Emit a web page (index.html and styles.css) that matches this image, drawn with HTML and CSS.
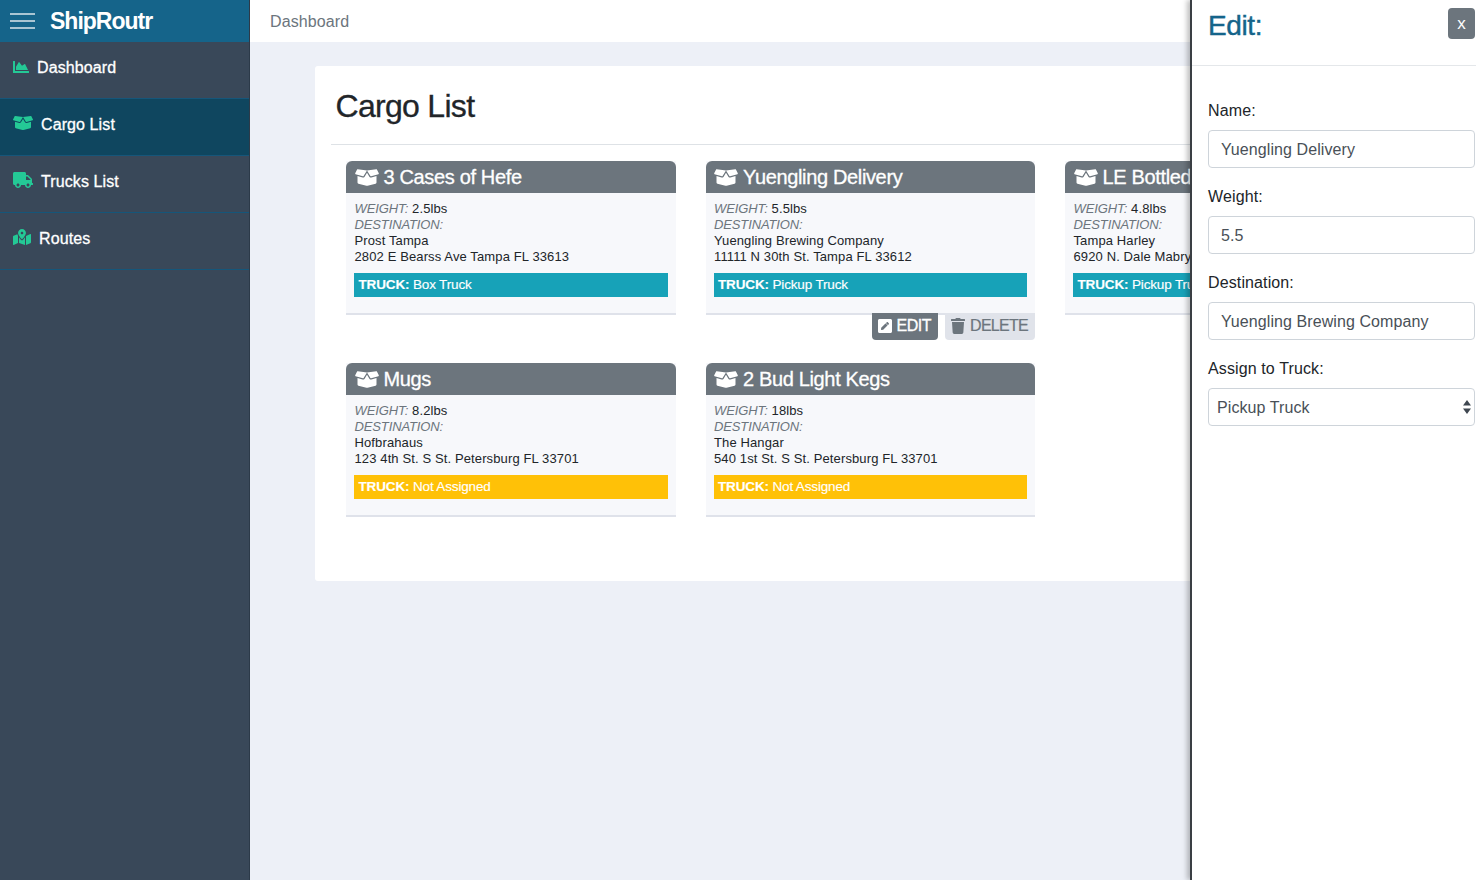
FILE: index.html
```html
<!DOCTYPE html>
<html lang="en">
<head>
<meta charset="utf-8">
<title>ShipRoutr</title>
<link rel="stylesheet" href="styles.css">
</head>
<body>
<svg class="defs" width="0" height="0">
  <symbol id="i-box" viewBox="0 0 640 512"><path d="M425.7 256c-16.9 0-32.8-9-41.4-23.4L320 126l-64.2 106.6c-8.7 14.5-24.6 23.5-41.5 23.5-4.5 0-9-.6-13.3-1.9L64 215v178c0 14.7 10 27.5 24.2 31l216.2 54.1c10.2 2.5 20.9 2.5 31 0L551.8 424c14.2-3.6 24.2-16.4 24.2-31V215l-137 39.1c-4.3 1.3-8.8 1.9-13.3 1.9zm212.6-112.2L586.8 41c-3.1-6.2-9.8-9.8-16.7-8.9L320 64l91.7 152.1c3.8 6.3 11.4 9.3 18.5 7.3l197.9-56.5c9.9-2.9 14.7-13.9 10.2-23.1zM53.2 41L1.7 143.8c-4.6 9.2.3 20.2 10.1 23l197.9 56.5c7.1 2 14.7-1 18.5-7.3L320 64 69.8 32.1c-6.9-.8-13.5 2.7-16.6 8.9z"/></symbol>
  <symbol id="i-chart" viewBox="0 0 512 512"><path d="M500 384c6.6 0 12 5.4 12 12v40c0 6.6-5.4 12-12 12H12c-6.6 0-12-5.4-12-12V76c0-6.6 5.4-12 12-12h40c6.6 0 12 5.4 12 12v308h436zM372.7 159.5L288 216l-85.3-113.7c-5.1-6.8-15.5-6.3-19.9 1L96 248v104h384l-89.9-187.8c-3.2-6.5-11.4-8.7-17.4-4.7z"/></symbol>
  <symbol id="i-truck" viewBox="0 0 640 512"><path d="M624 352h-16V243.9c0-12.7-5.1-24.9-14.1-33.9L494 110.1c-9-9-21.2-14.1-33.9-14.1H416V48c0-26.5-21.5-48-48-48H48C21.5 0 0 21.5 0 48v320c0 26.5 21.5 48 48 48h16c0 53 43 96 96 96s96-43 96-96h128c0 53 43 96 96 96s96-43 96-96h48c8.8 0 16-7.2 16-16v-32c0-8.8-7.2-16-16-16zM160 464c-26.5 0-48-21.5-48-48s21.5-48 48-48 48 21.5 48 48-21.5 48-48 48zm320 0c-26.5 0-48-21.5-48-48s21.5-48 48-48 48 21.5 48 48-21.5 48-48 48zm80-208H416V144h44.1l99.9 99.9V256z"/></symbol>
  <symbol id="i-map" viewBox="0 0 576 512"><path d="M288 0c-69.59 0-126 56.41-126 126 0 56.26 82.35 158.8 113.9 196.02 6.39 7.54 17.82 7.54 24.2 0C331.65 284.8 414 182.26 414 126 414 56.41 357.59 0 288 0zm0 168c-23.2 0-42-18.8-42-42s18.8-42 42-42 42 18.8 42 42-18.8 42-42 42zM20.12 215.95A32.006 32.006 0 0 0 0 245.66v250.32c0 11.32 11.43 19.06 21.94 14.86L160 448V214.92c-8.84-15.98-16.07-31.54-21.25-46.42L20.12 215.95zM288 359.67c-14.07 0-27.38-6.18-36.51-16.96-19.66-23.2-40.57-49.62-59.49-76.72V448l192 64V265.99c-18.92 27.09-39.82 53.52-59.49 76.72-9.13 10.77-22.44 16.96-36.51 16.96zm266.06-198.51L416 224v288l139.88-55.95A31.996 31.996 0 0 0 576 426.34V176.02c0-11.32-11.43-19.06-21.94-14.86z"/></symbol>
  <symbol id="i-edit" viewBox="0 0 448 512"><path d="M400 480H48c-26.5 0-48-21.5-48-48V80c0-26.5 21.5-48 48-48h352c26.5 0 48 21.5 48 48v352c0 26.5-21.5 48-48 48zM238.1 177.9L102.4 313.6l-6.3 57.1c-.8 7.6 5.6 14.1 13.3 13.3l57.1-6.3L302.2 242c2.3-2.3 2.3-6.1 0-8.5L246.7 178c-2.5-2.4-6.3-2.4-8.6-.1zM345 165.1L314.9 135c-9.4-9.4-24.6-9.4-33.9 0l-23.1 23.1c-2.3 2.3-2.3 6.1 0 8.5l55.5 55.5c2.3 2.3 6.1 2.3 8.5 0L345 199c9.3-9.3 9.3-24.5 0-33.9z"/></symbol>
  <symbol id="i-trash" viewBox="0 0 448 512"><path d="M432 32H312l-9.4-18.7A24 24 0 0 0 281.1 0H166.8a23.72 23.72 0 0 0-21.4 13.3L136 32H16A16 16 0 0 0 0 48v32a16 16 0 0 0 16 16h416a16 16 0 0 0 16-16V48a16 16 0 0 0-16-16zM53.2 467a48 48 0 0 0 47.9 45h245.8a48 48 0 0 0 47.9-45L416 128H32z"/></symbol>
</svg>

<div class="app">
  <aside class="sidebar">
    <div class="brand">
      <span class="burger"><i></i><i></i><i></i></span>
      <span class="brand-name">ShipRoutr</span>
    </div>
    <nav class="nav">
      <a class="nav-item nav-dash"><svg class="nav-icon ic-chart"><use href="#i-chart"/></svg>Dashboard</a>
      <a class="nav-item nav-cargo active"><svg class="nav-icon ic-box"><use href="#i-box"/></svg>Cargo List</a>
      <a class="nav-item nav-trucks"><svg class="nav-icon ic-truck"><use href="#i-truck"/></svg>Trucks List</a>
      <a class="nav-item nav-routes"><svg class="nav-icon ic-map"><use href="#i-map"/></svg>Routes</a>
    </nav>
  </aside>

  <div class="page">
    <header class="topbar">Dashboard</header>
    <main class="main">
      <section class="panel">
        <h1 class="title">Cargo List</h1>
        <div class="grid">
          <article class="card-col">
            <div class="card">
              <h2 class="card-head"><svg class="head-icon"><use href="#i-box"/></svg>3 Cases of Hefe</h2>
              <div class="card-body">
                <p><em>WEIGHT:</em> 2.5lbs</p>
                <p><em>DESTINATION:</em></p>
                <p>Prost Tampa</p>
                <p>2802 E Bearss Ave Tampa FL 33613</p>
                <div class="truck info"><b>TRUCK:</b> Box Truck</div>
              </div>
            </div>
          </article>
          <article class="card-col">
            <div class="card">
              <h2 class="card-head"><svg class="head-icon"><use href="#i-box"/></svg>Yuengling Delivery</h2>
              <div class="card-body">
                <p><em>WEIGHT:</em> 5.5lbs</p>
                <p><em>DESTINATION:</em></p>
                <p>Yuengling Brewing Company</p>
                <p>11111 N 30th St. Tampa FL 33612</p>
                <div class="truck info"><b>TRUCK:</b> Pickup Truck</div>
              </div>
            </div>
            <div class="actions">
              <button class="btn btn-edit"><svg class="btn-icon"><use href="#i-edit"/></svg>EDIT</button>
              <button class="btn btn-delete"><svg class="btn-icon"><use href="#i-trash"/></svg>DELETE</button>
            </div>
          </article>
          <article class="card-col">
            <div class="card">
              <h2 class="card-head"><svg class="head-icon"><use href="#i-box"/></svg>LE Bottled Beer</h2>
              <div class="card-body">
                <p><em>WEIGHT:</em> 4.8lbs</p>
                <p><em>DESTINATION:</em></p>
                <p>Tampa Harley</p>
                <p>6920 N. Dale Mabry Hwy Tampa FL 33614</p>
                <div class="truck info"><b>TRUCK:</b> Pickup Truck</div>
              </div>
            </div>
          </article>
          <article class="card-col">
            <div class="card">
              <h2 class="card-head"><svg class="head-icon"><use href="#i-box"/></svg>Mugs</h2>
              <div class="card-body">
                <p><em>WEIGHT:</em> 8.2lbs</p>
                <p><em>DESTINATION:</em></p>
                <p>Hofbrahaus</p>
                <p>123 4th St. S St. Petersburg FL 33701</p>
                <div class="truck warn"><b>TRUCK:</b> Not Assigned</div>
              </div>
            </div>
          </article>
          <article class="card-col">
            <div class="card">
              <h2 class="card-head"><svg class="head-icon"><use href="#i-box"/></svg>2 Bud Light Kegs</h2>
              <div class="card-body">
                <p><em>WEIGHT:</em> 18lbs</p>
                <p><em>DESTINATION:</em></p>
                <p>The Hangar</p>
                <p>540 1st St. S St. Petersburg FL 33701</p>
                <div class="truck warn"><b>TRUCK:</b> Not Assigned</div>
              </div>
            </div>
          </article>
        </div>
      </section>
    </main>
  </div>

  <aside class="drawer">
    <div class="drawer-head">
      <h2 class="drawer-title">Edit:</h2>
      <button class="close">x</button>
    </div>
    <form class="form">
      <label class="label" for="f-name">Name:</label>
      <input class="field" id="f-name" value="Yuengling Delivery">
      <label class="label" for="f-weight">Weight:</label>
      <input class="field" id="f-weight" value="5.5">
      <label class="label" for="f-dest">Destination:</label>
      <input class="field" id="f-dest" value="Yuengling Brewing Company">
      <label class="label" for="f-truck">Assign to Truck:</label>
      <div class="select-wrap">
        <select class="field select" id="f-truck"><option>Pickup Truck</option><option>Box Truck</option></select>
        <svg class="arrows" viewBox="0 0 8 14"><path d="M4 0l4 5.500H0zM4 14L0 8.500h8z"/></svg>
      </div>
    </form>
  </aside>
</div>
</body>
</html>
```
FILE: styles.css
```css
* { box-sizing: border-box; }
html, body { margin: 0; height: 100%; overflow: hidden; }
body { font-family: "Liberation Sans", Arial, sans-serif; font-size: 16px; color: #212529; }
.defs { position: absolute; }
svg { fill: currentColor; display: block; flex: none; }

.app { position: relative; display: flex; width: 1476px; height: 880px; overflow: hidden; }

.sidebar { width: 250px; flex: none; background: #394859; border-right: 1px solid #2c3a49; color: #fff; }
.brand { height: 42px; background: #15648a; display: flex; align-items: center; padding-left: 10px; }
.burger { width: 25px; display: flex; flex-direction: column; gap: 5px; margin-right: 15px; }
.burger i { display: block; height: 2px; background: #a9c5d3; }
.brand-name { font-size: 23px; font-weight: 700; letter-spacing: -1px; }
.nav-item { height: 57px; display: flex; align-items: flex-start; padding: 16px 0 0 13px; font-size: 16px; line-height: 20px; border-bottom: 1px solid #15567a; -webkit-text-stroke: .3px #fff; letter-spacing: .1px; }
.nav-item.active { background: #0f465f; }
.nav-icon { color: #24c996; }
.ic-chart { width: 16px; height: 16px; margin-right: 8px; margin-top: 1px; }
.ic-box { width: 20px; height: 16px; margin-right: 8px; margin-top: 0; }
.ic-truck { width: 20px; height: 16px; margin-right: 8px; margin-top: 0; }
.ic-map { width: 18px; height: 16px; margin-right: 8px; margin-top: 0; }

.page { flex: 1; min-width: 0; display: flex; flex-direction: column; background: #edf0f7; }
.topbar { height: 42px; flex: none; background: #fff; padding: 12px 0 0 20px; line-height: 20px; color: #6c757d; font-size: 16px; letter-spacing: .1px; }
.main { flex: 1; padding: 24px 0 0 65px; }
.panel { width: 1110px; height: 515px; background: #fff; border-radius: 3px; padding: 0 16px; }
.title { margin: 0; height: 79px; border-bottom: 1px solid #dee2e6; padding: 22px 0 0 4.500px; font-size: 32px; line-height: 36px; font-weight: 500; letter-spacing: -.7px; -webkit-text-stroke: .3px #212529; }
.grid { display: flex; flex-wrap: wrap; width: 1079px; }
.card-col { width: 359.5px; height: 202px; padding: 16px 15px 0; }
.card { border-bottom: 2px solid #dfe2ea; background: #f7f8fb; height: 154px; }
.card-head { margin: 0; height: 32px; background: #6c757d; color: #fff; border-radius: 6px 6px 0 0; display: flex; align-items: center; padding-left: 8.500px; font-size: 20px; line-height: 32px; font-weight: 400; white-space: nowrap; overflow: hidden; letter-spacing: -.35px; -webkit-text-stroke: .3px #fff; }
.head-icon { width: 24px; height: 19px; margin-right: 5px; }
.card-body { padding: 8px 8px 0; font-size: 13px; line-height: 16px; color: #212529; }
.card-body p { margin: 0 0 0 .5px; white-space: nowrap; letter-spacing: .12px; }
.card-body em { color: #6c757d; letter-spacing: -.12px; }
.truck { height: 24px; margin-top: 8px; padding-left: 4.500px; line-height: 23px; color: #fff; font-size: 13.500px; white-space: nowrap; overflow: hidden; letter-spacing: -.15px; -webkit-text-stroke: .15px #fff; }
.info { background: #17a2b8; }
.warn { background: #ffc107; }
.actions { display: flex; justify-content: flex-end; gap: 7px; margin-top: -2px; }
.btn { height: 27px; border: 0; padding: 0 7px 1px 6px; display: flex; align-items: center; font: 16px "Liberation Sans", Arial, sans-serif; border-radius: 0 0 4px 4px; letter-spacing: -.5px; }
.btn-icon { width: 14px; height: 16px; margin-right: 5px; }
.btn-edit { background: #6c757d; color: #fff; -webkit-text-stroke: .3px #fff; }
.btn-delete { background: #e0e3ea; color: #6c757d; letter-spacing: -.72px; -webkit-text-stroke: .2px #6c757d; }

.drawer { position: absolute; top: 0; right: 0; bottom: 0; width: 286px; background: #fff; border-left: 2px solid #3a3f44; box-shadow: -3px 0 5px rgba(0,0,0,.25); }
.drawer-head { height: 66px; border-bottom: 1px solid #e4e7ea; display: flex; justify-content: space-between; padding: 8px 1px 0 16px; }
.drawer-title { margin: 0; font-size: 28px; line-height: 36px; color: #15648a; font-weight: 400; letter-spacing: -.4px; -webkit-text-stroke: .4px #15648a; }
.close { width: 27px; height: 31px; border: 0; border-radius: 4px; background: #6c757d; color: #fff; font: 17px/1 "Liberation Sans", Arial, sans-serif; padding: 0; }
.form { padding: 33px 1px 0 16px; display: flex; flex-direction: column; }
.label { line-height: 24px; margin-bottom: 7px; font-size: 16px; color: #212529; letter-spacing: .12px; }
.field { width: 100%; height: 38px; margin-bottom: 17px; border: 1px solid #ced4da; border-radius: 4px; background: #fff; padding: 2px 12px 0; font: 16px "Liberation Sans", Arial, sans-serif; color: #495057; outline: 0; letter-spacing: .08px; }
.select-wrap { position: relative; }
.select { appearance: none; -webkit-appearance: none; padding: 0 0 0 8px; margin: 0; }
.arrows { position: absolute; right: 4px; top: 12px; width: 8px; height: 14px; fill: #3f4750; }
```
